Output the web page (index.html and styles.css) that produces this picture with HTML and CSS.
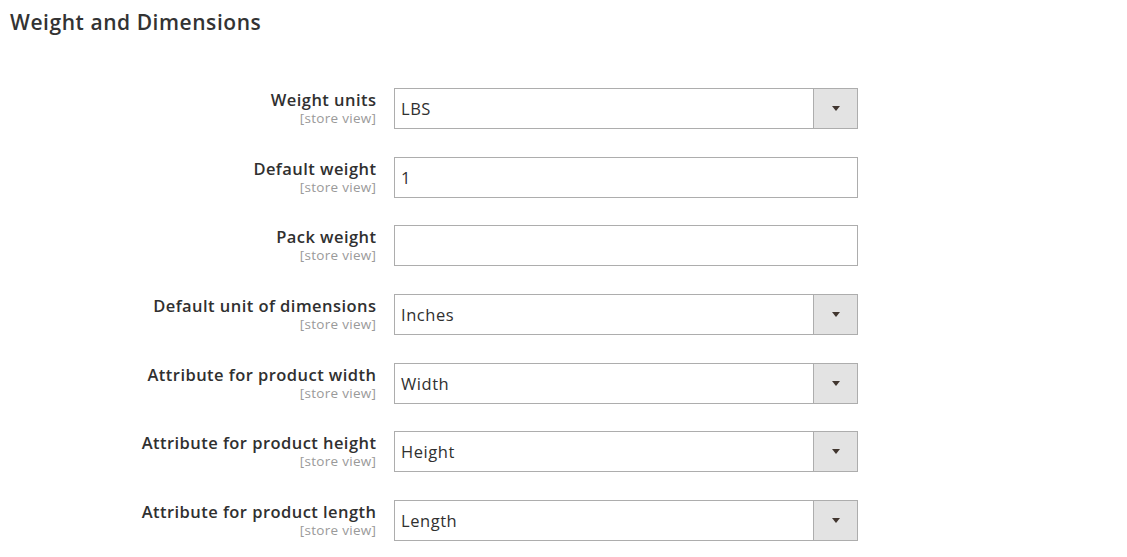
FILE: index.html
```html
<!DOCTYPE html>
<html lang="en">
<head>
<meta charset="utf-8">
<title>Weight and Dimensions</title>
<link rel="stylesheet" href="styles.css">
</head>
<body>
<section class="panel">
  <h2 class="title">Weight and Dimensions</h2>
  <div class="form">
    <div class="row">
      <div class="label"><span class="name">Weight units</span><span class="scope">[store view]</span></div>
      <div class="control select"><span class="value">LBS</span><span class="btn"><svg width="8" height="5" viewBox="0 0 8 5"><path d="M0 0h8L4 5z" fill="#41362f"/></svg></span></div>
    </div>
    <div class="row">
      <div class="label"><span class="name">Default weight</span><span class="scope">[store view]</span></div>
      <div class="control input"><span class="value">1</span></div>
    </div>
    <div class="row">
      <div class="label"><span class="name">Pack weight</span><span class="scope">[store view]</span></div>
      <div class="control input"><span class="value"></span></div>
    </div>
    <div class="row">
      <div class="label"><span class="name">Default unit of dimensions</span><span class="scope">[store view]</span></div>
      <div class="control select"><span class="value">Inches</span><span class="btn"><svg width="8" height="5" viewBox="0 0 8 5"><path d="M0 0h8L4 5z" fill="#41362f"/></svg></span></div>
    </div>
    <div class="row">
      <div class="label"><span class="name">Attribute for product width</span><span class="scope">[store view]</span></div>
      <div class="control select"><span class="value">Width</span><span class="btn"><svg width="8" height="5" viewBox="0 0 8 5"><path d="M0 0h8L4 5z" fill="#41362f"/></svg></span></div>
    </div>
    <div class="row">
      <div class="label"><span class="name">Attribute for product height</span><span class="scope">[store view]</span></div>
      <div class="control select"><span class="value">Height</span><span class="btn"><svg width="8" height="5" viewBox="0 0 8 5"><path d="M0 0h8L4 5z" fill="#41362f"/></svg></span></div>
    </div>
    <div class="row">
      <div class="label"><span class="name">Attribute for product length</span><span class="scope">[store view]</span></div>
      <div class="control select"><span class="value">Length</span><span class="btn"><svg width="8" height="5" viewBox="0 0 8 5"><path d="M0 0h8L4 5z" fill="#41362f"/></svg></span></div>
    </div>
  </div>
</section>
</body>
</html>
```

FILE: styles.css
```css
html, body {
  margin: 0;
  padding: 0;
  background: #ffffff;
}
body {
  font-family: "Open Sans", "Noto Sans", sans-serif;
  color: #303030;
}
.panel {
  padding: 9px 0 0 10px;
}
.title {
  margin: 0;
  font-size: 21px;
  font-weight: 600;
  line-height: 27px;
  letter-spacing: 0.55px;
  color: #333333;
}
.form {
  margin-top: 52px;
  display: flex;
  flex-direction: column;
  gap: 27.7px;
}
.row {
  display: grid;
  grid-template-columns: 366px 464px;
  column-gap: 18px;
  align-items: start;
}
.label {
  display: flex;
  flex-direction: column;
  align-items: flex-end;
  text-align: right;
  padding-top: 1px;
}
.name {
  font-size: 16.5px;
  font-weight: 600;
  line-height: 22px;
  letter-spacing: 0.45px;
  margin-right: -0.45px;
  color: #303030;
}
.scope {
  font-size: 13.5px;
  line-height: 15px;
  letter-spacing: 0.3px;
  margin-right: -0.3px;
  color: #9a9a9a;
}
.control {
  box-sizing: border-box;
  height: 41px;
  border: 1px solid #adadad;
  background: #ffffff;
  display: flex;
  align-items: stretch;
}
.value {
  flex: 1;
  display: flex;
  align-items: center;
  padding-left: 6px;
  font-size: 16.5px;
  letter-spacing: 0.55px;
  color: #303030;
}
.btn {
  width: 42px;
  background: #e3e3e3;
  border-left: 1px solid #adadad;
  display: flex;
  align-items: center;
  justify-content: center;
  padding-left: 1px;
}
```
